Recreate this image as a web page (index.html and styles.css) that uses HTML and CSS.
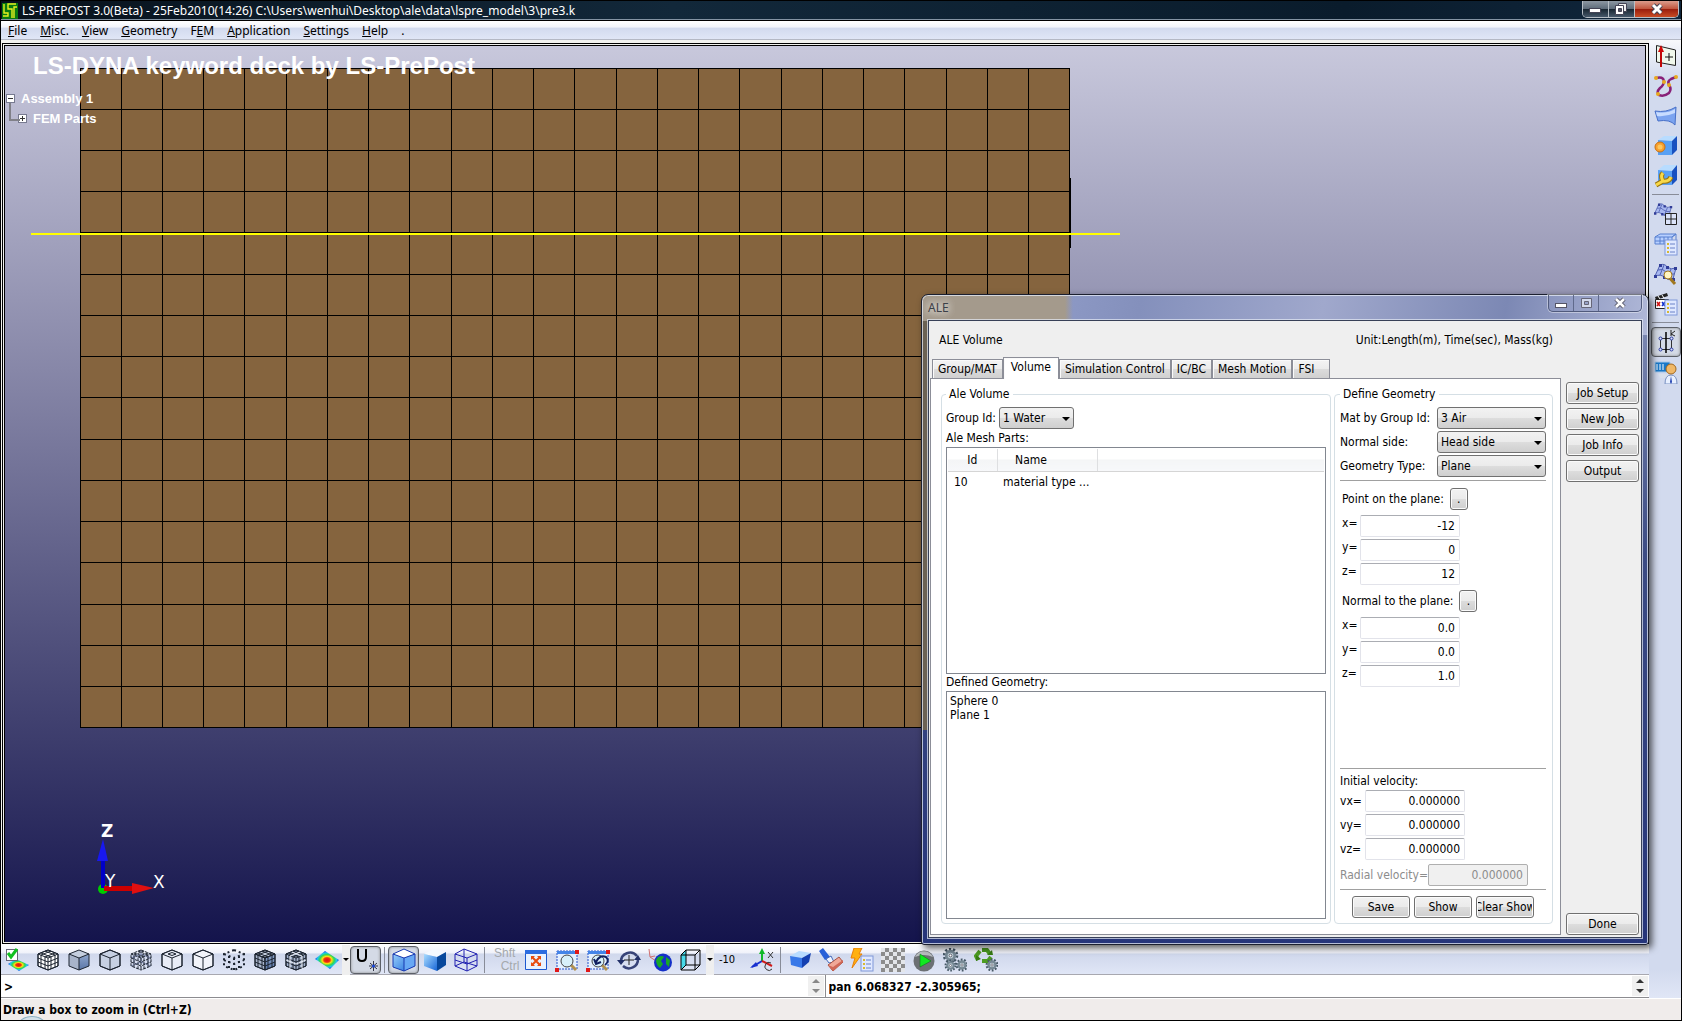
FILE: index.html
```
<!DOCTYPE html>
<html lang="en">
<head>
  <meta charset="UTF-8">
  <title>LS-PREPOST 3.0(Beta)</title>
  <meta name="viewport" content="width=device-width, initial-scale=1.0">
  <link rel="stylesheet" href="styles.css">
</head>
<body>
  <!-- shared shapes -->
  <svg class="defs" width="0" height="0" aria-hidden="true">
    <defs>
      <linearGradient id="blueFace" x1="0" y1="0" x2="1" y2="1">
        <stop offset="0" stop-color="#a9dcff"/><stop offset="1" stop-color="#1766d8"/>
      </linearGradient>
      <linearGradient id="greyFace" x1="0" y1="0" x2="0" y2="1">
        <stop offset="0" stop-color="#8fa6cc"/><stop offset="1" stop-color="#5a76a8"/>
      </linearGradient>
      <radialGradient id="rainbow">
        <stop offset="0" stop-color="#e01010"/><stop offset=".25" stop-color="#f03010"/>
        <stop offset=".4" stop-color="#ffe010"/><stop offset=".6" stop-color="#30d850"/>
        <stop offset=".8" stop-color="#20c8f0"/><stop offset="1" stop-color="#1840e0"/>
      </radialGradient>
      <symbol id="cubeEdges" viewBox="0 0 24 24">
        <path d="M12 2L2 6V18L12 22L22 18V6ZM2 6L12 10L22 6M12 10V22"/>
      </symbol>
      <symbol id="cubeGrid" viewBox="0 0 24 24">
        <path d="M12 2L2 6V18L12 22L22 18V6ZM2 6L12 10L22 6M12 10V22M5 5L15 9V21M9 3L19 7V19M19 5L9 9V21M15 3L5 7V19M2 10L12 14L22 10M2 14L12 18L22 14"/>
      </symbol>
      <symbol id="gear" viewBox="0 0 24 24">
        <circle cx="12" cy="12" r="9" fill="none" stroke="#465866" stroke-width="4" stroke-dasharray="3 2.6"/>
        <circle cx="12" cy="12" r="6" fill="#c4d4dc" stroke="#768894" stroke-width="4"/>
        <circle cx="12" cy="12" r="2" fill="#fff" stroke="#334"/>
      </symbol>
      <symbol id="listSheet" viewBox="0 0 24 24">
        <rect x="11" y="8" width="12" height="15" fill="#dfe8ff" stroke="#7f97d8"/>
        <path d="M13 12H15M13 16H15M13 20H15" stroke="#d8b830" stroke-width="2"/>
        <path d="M16 12H21M16 16H21M16 20H21" stroke="#6a82c8"/>
      </symbol>
      <symbol id="curvedMesh" viewBox="0 0 24 24">
        <path d="M1 14L6 3Q11 1 13 5Q17 8 22 6L19 17Q14 19 10 15Q7 12 1 14Z" fill="#a8b8f0" stroke="#5060b0"/>
        <path d="M4 8Q9 6 12 10Q16 13 20 12M6 13L10 3M13 17L17 7" fill="none" stroke="#5060b0"/>
        <path d="M0 13h3v3H0zM5 2h3v3H5zM12 4h3v3h-3zM20 5h3v3h-3zM18 16h3v3h-3zM9 14h3v3H9z" fill="#303c98"/>
      </symbol>
      <symbol id="zoomFrame" viewBox="0 0 24 24">
        <path d="M2 3H22V21H2Z" fill="#e4f0ff" stroke="#2450c8" stroke-dasharray="2 1"/>
        <path d="M2 3H22V6H2Z" fill="#4484e8"/>
        <path d="M0 20h4v4H0zM20 2h4v4h-4z" fill="#e01818"/>
      </symbol>
    </defs>
  </svg>

  <div class="app">
    <header class="titlebar">
      <svg class="app-logo" viewBox="0 0 16 16" aria-hidden="true">
        <rect width="16" height="16" fill="#0a7a10"/>
        <path d="M2 1V10H6V13H1M14 1H6V6H10V15M15 4H12V15" fill="none" stroke="#e8f020" stroke-width="1.4"/>
      </svg>
      <h1 class="titlebar-text">LS-PREPOST 3.0(Beta) - 25Feb2010(14:26) C:\Users\wenhui\Desktop\ale\data\lspre_model\3\pre3.k</h1>
      <div class="win-buttons">
        <button class="win-btn" aria-label="Minimize"><svg viewBox="0 0 24 14"><rect x="6.500" y="6.500" width="11" height="4" fill="#fff" stroke="#445"/></svg></button>
        <button class="win-btn" aria-label="Restore"><svg viewBox="0 0 24 14"><path d="M9.500 1.500H17.500V9.500H9.500Z" fill="#eee" stroke="#445"/><path d="M6.500 3.500H14.500V12.500H6.500Z" fill="#fff" stroke="#445"/><path d="M9.500 6.500H12.500V9.500H9.500Z" fill="#556" stroke="#445"/></svg></button>
        <button class="win-btn win-close" aria-label="Close"><svg viewBox="0 0 24 14"><path d="M8 3L16 11M16 3L8 11" stroke="#445" stroke-width="5"/><path d="M8 3L16 11M16 3L8 11" stroke="#fff" stroke-width="3"/></svg></button>
      </div>
    </header>

    <nav class="menubar">
      <a href="#"><u>F</u>ile</a>
      <a href="#"><u>M</u>isc.</a>
      <a href="#"><u>V</u>iew</a>
      <a href="#"><u>G</u>eometry</a>
      <a href="#">F<u>E</u>M</a>
      <a href="#"><u>A</u>pplication</a>
      <a href="#"><u>S</u>ettings</a>
      <a href="#"><u>H</u>elp</a>
      <a href="#">.</a>
    </nav>

    <div class="workspace">
      <main class="work-column">
        <div class="viewport-frame">
          <div class="viewport">
            <svg class="mesh" viewBox="0 0 24 16" preserveAspectRatio="none" aria-hidden="true">
              <rect width="24" height="16" fill="#85643e"/>
              <path d="M0 0V16M1 0V16M2 0V16M3 0V16M4 0V16M5 0V16M6 0V16M7 0V16M8 0V16M9 0V16M10 0V16M11 0V16M12 0V16M13 0V16M14 0V16M15 0V16M16 0V16M17 0V16M18 0V16M19 0V16M20 0V16M21 0V16M22 0V16M23 0V16M24 0V16M0 0H24M0 1H24M0 2H24M0 3H24M0 4H24M0 5H24M0 6H24M0 7H24M0 8H24M0 9H24M0 10H24M0 11H24M0 12H24M0 13H24M0 14H24M0 15H24M0 16H24"/>
            </svg>
            <div class="mesh-node"></div>
            <div class="cut-plane"></div>
            <h2 class="deck-title">LS-DYNA keyword deck by LS-PrePost</h2>
            <div class="tree">
              <div class="tree-row">
                <svg viewBox="0 0 9 9"><rect x=".5" y=".5" width="8" height="8" fill="#fff" stroke="#777a90"/><path d="M2 4.500H7" stroke="#333"/></svg>
                <span>Assembly 1</span>
              </div>
              <div class="tree-row tree-child">
                <svg viewBox="0 0 9 9"><rect x=".5" y=".5" width="8" height="8" fill="#fff" stroke="#777a90"/><path d="M2 4.500H7M4.500 2V7" stroke="#333"/></svg>
                <span>FEM Parts</span>
              </div>
            </div>
            <div class="triad">
              <svg viewBox="0 0 60 60" aria-hidden="true">
                <circle cx="6" cy="53" r="5" fill="#0c0"/>
                <path d="M4 52V24H8V52Z" fill="#0000c8"/><path d="M0 25L6 3L11 25Z" fill="#1818f0"/>
                <path d="M7 50H36V55H7Z" fill="#c00"/><path d="M35 47L57 52L35 58Z" fill="#e01010"/>
              </svg>
              <span class="axis axis-z">Z</span>
              <span class="axis axis-y">Y</span>
              <span class="axis axis-x">X</span>
            </div>
          </div>
        </div>

        <div class="toolbar">
          <button class="tool" aria-label="Apply fringe"><svg viewBox="0 0 24 24"><path d="M3 16L11 11L24 17L14 23Z" fill="url(#rainbow)"/><rect x="1.500" y="1.500" width="11" height="11" fill="#fff" stroke="#667"/><path d="M3 5L6 9L12 1" fill="none" stroke="#10c020" stroke-width="3"/></svg></button>
          <button class="tool" aria-label="Mesh hidden"><svg class="line" viewBox="0 0 24 24"><path d="M12 2L2 6V18L12 22L22 18V6Z" fill="#fff"/><use href="#cubeGrid"/></svg></button>
          <button class="tool" aria-label="Shaded"><svg class="line" viewBox="0 0 24 24"><path d="M12 2L2 6L12 10L22 6Z" fill="#c4cede" stroke="none"/><path d="M2 6V18L12 22V10Z" fill="#a8b4ca" stroke="none"/><path d="M12 10V22L22 18V6Z" fill="url(#greyFace)" stroke="none"/><use href="#cubeEdges"/></svg></button>
          <button class="tool" aria-label="Flat"><svg class="line" viewBox="0 0 24 24"><path d="M12 2L2 6V18L12 22L22 18V6Z" fill="#c6d0e2"/><use href="#cubeEdges"/></svg></button>
          <button class="tool" aria-label="Wireframe"><svg class="line" viewBox="0 0 24 24"><path d="M2 18L12 14L22 18M12 2V14M2 10L12 6L22 10M5 8V16M19 8V16" stroke="#7480a8"/><use href="#cubeGrid" stroke-dasharray="3 1"/></svg></button>
          <button class="tool" aria-label="Feature lines"><svg class="line" viewBox="0 0 24 24"><path d="M12 2L2 6V18L12 22L22 18V6Z" fill="#e8ecf6"/><use href="#cubeEdges"/><path d="M8 6L12 4.500L16 6L12 7.500Z"/></svg></button>
          <button class="tool" aria-label="Edges"><svg class="line" viewBox="0 0 24 24"><path d="M12 2L2 6V18L12 22L22 18V6Z" fill="#f2f4fa"/><use href="#cubeEdges"/></svg></button>
          <button class="tool" aria-label="Points"><svg class="line" viewBox="0 0 24 24"><path stroke-width="2" stroke-dasharray="2 3" d="M12 2L2 6V18L12 22L22 18V6ZM2 6L12 10L22 6M12 10V22M7 8V20M17 8V20M2 12L12 16L22 12"/></svg></button>
          <button class="tool" aria-label="Shaded mesh"><svg class="line" viewBox="0 0 24 24"><path d="M12 2L2 6L12 10L22 6Z" fill="#c4cede"/><path d="M2 6V18L12 22V10Z" fill="#a8b4ca"/><path d="M12 10V22L22 18V6Z" fill="url(#greyFace)"/><use href="#cubeGrid"/></svg></button>
          <button class="tool" aria-label="Shrunk mesh"><svg class="line" viewBox="0 0 24 24"><path d="M12 2L2 6V18L12 22L22 18V6Z" fill="#a4b2cc"/><use href="#cubeGrid"/><path d="M8 4L18 8V20M16 4L6 8V20M2 12L12 16L22 12" stroke="#e8ecf4"/></svg></button>
          <button class="tool" aria-label="Fringe"><svg viewBox="0 0 24 24"><path d="M0 11L10 3L24 12L15 21Z" fill="url(#rainbow)"/></svg></button>
          <button class="drop" aria-label="Fringe options"></button>
          <button class="tool pressed" aria-label="Unreferenced nodes"><svg viewBox="0 0 24 24"><path d="M4 1V9Q4 13 8 13Q12 13 12 9V1" fill="none" stroke="#000" stroke-width="2"/><path d="M15 18H24M19.500 13V23M16 15L23 21M23 15L16 21" stroke="#334"/><circle cx="19.500" cy="18" r="1.500" fill="#1848e0"/></svg></button>
          <span class="divider"></span>
          <button class="tool pressed" aria-label="Surface edges"><svg viewBox="0 0 24 24"><path d="M12 1L1 6V19L12 23L23 18V6Z" fill="url(#blueFace)"/><path d="M12 1L1 6L12 10L23 6Z" fill="#fff"/><path d="M12 10V23L23 18V6Z" fill="#68a8f4"/><path d="M12 1L1 6V19L12 23L23 18V6ZM1 6L12 10L23 6M12 10V23" fill="none" stroke="#1838b0"/></svg></button>
          <button class="tool" aria-label="Surface"><svg viewBox="0 0 24 24"><path d="M11 1L1 6L14 9L23 4Z" fill="#f4f9ff"/><path d="M1 6V18L14 23V9Z" fill="url(#blueFace)"/><path d="M14 9V23L23 17V4Z" fill="#08489c"/></svg></button>
          <button class="tool" aria-label="Surface wire"><svg viewBox="0 0 24 24"><path d="M10 1L1 6V18L13 23L23 18V6ZM1 6L13 10L23 6M13 10V23M10 1V14L1 18M10 14L23 18M1 12L13 16L23 12" fill="none" stroke="#2020b0"/></svg></button>
          <span class="divider"></span>
          <span class="keys">Shft<br>&nbsp; Ctrl</span>
          <button class="tool" aria-label="Fit"><svg viewBox="0 0 24 24"><path d="M1.500 2.500H22.500V21.500H1.500Z" fill="#e8f2ff" stroke="#1c58d0"/><path d="M1 2H23V6H1Z" fill="#2c6ce0"/><path d="M8 9L16 17M16 9L8 17" stroke="#e84c10" stroke-width="2"/><path d="M7 8h4l-4 4zM17 8v4l-4-4zM7 18v-4l4 4zM17 18h-4l4-4z" fill="#e84c10"/></svg></button>
          <button class="tool" aria-label="Zoom box"><svg viewBox="0 0 24 24"><use href="#zoomFrame"/><path d="M16 17L21 22" stroke="#b09050" stroke-width="3"/><circle cx="12" cy="13" r="6" fill="#d8f0fa" stroke="#444"/></svg></button>
          <button class="tool" aria-label="Zoom back"><svg viewBox="0 0 24 24"><use href="#zoomFrame"/><path d="M16 17L21 22" stroke="#b09050" stroke-width="3"/><circle cx="12" cy="13" r="6" fill="#d8f0fa" stroke="#444"/><path d="M10 14Q14 6 20 9Q24 13 19 17M8 11L10 16L15 14" fill="none" stroke="#102060" stroke-width="2"/></svg></button>
          <button class="tool" aria-label="Rotate"><svg viewBox="0 0 24 24"><path d="M4 14A9 9 0 0 1 20 8M21 11A9 9 0 0 1 6 18" fill="none" stroke="#384478" stroke-width="2.500"/><path d="M0 12H8L4 17ZM17 12H24L21 7Z" fill="#223068"/><path d="M7 12H17M12 7V17" stroke="#222"/></svg></button>
          <button class="tool" aria-label="Globe view"><svg viewBox="0 0 24 24"><path d="M1 1L2 9L7 8M2 9L8 13" fill="none" stroke="#d07070"/><circle cx="15" cy="14.500" r="9" fill="#1430c8"/><path d="M10 9Q14 7 16 9L13 13L15 16L12 20Q8 17 8 12ZM18 9L22 12L21 19L18 16Z" fill="#18a828"/></svg></button>
          <button class="tool" aria-label="View cube"><svg viewBox="0 0 24 24"><path d="M2 7L7 2V17L2 22Z" fill="#48d8e8"/><path d="M2 7H16V22H2ZM2 7L7 2H21L16 7M21 2V17L16 22M7 2V17H21M7 17L2 22" fill="none" stroke="#000"/></svg></button>
          <button class="drop" aria-label="View options"></button>
          <span class="angle">-10</span>
          <button class="tool" aria-label="Rotate axes"><svg viewBox="0 0 24 24"><path d="M12 13V2" stroke="#10b828" stroke-width="2"/><path d="M9 6L12 0L15 6Z" fill="#10b828"/><path d="M12 13L2 19" stroke="#1830d0" stroke-width="2"/><path d="M0 20L6 14L8 18Z" fill="#1830d0"/><path d="M12 13L22 18" stroke="#d01818" stroke-width="2"/><path d="M18 4L23 10M23 4L18 10M21 15A4 4 0 1 0 22 21" fill="none" stroke="#333"/></svg></button>
          <span class="divider"></span>
          <button class="tool" aria-label="Solid"><svg viewBox="0 0 24 24"><path d="M2 8L11 3L23 5L14 10Z" fill="#b8dcff"/><path d="M2 8L14 10V20L3 17Z" fill="#3878e8"/><path d="M14 10L23 5L21 14L14 20Z" fill="#1440b0"/></svg></button>
          <button class="tool" aria-label="Erase light"><svg viewBox="0 0 24 24"><path d="M0 3L4 0L11 9L6 12Z" fill="#2860d8"/><path d="M7 11L12 8L15 14L10 15Z" fill="#f0f4ff" stroke="#4468b8"/><path d="M9 17L20 9L24 14L14 23Z" fill="#f0a898" stroke="#a85040"/><path d="M9 17L14 19L24 12V14L14 23Z" fill="#d06858"/></svg></button>
          <button class="tool" aria-label="Quick list"><svg viewBox="0 0 24 24"><path d="M4 0H12L9 6H12L2 20L5 10H1Z" fill="#ffb010" stroke="#e88008"/><use href="#listSheet"/></svg></button>
          <button class="tool" aria-label="Transparency"><span class="checker"></span></button>
          <button class="tool" aria-label="Run"><svg viewBox="0 0 24 24"><circle cx="12" cy="13" r="10.500" fill="#6c7074"/><path d="M3 9A10 10 0 0 1 21 9Q12 5 3 9Z" fill="#b8bcc0"/><path d="M8 6L19 13L8 19Z" fill="#10e820" stroke="#086810" stroke-width=".5"/></svg></button>
          <button class="tool" aria-label="Settings"><svg viewBox="0 0 24 24"><use href="#gear" x="-1" y="-1" width="17" height="17"/><use href="#gear" x="1" y="11" width="13" height="13"/><use href="#gear" x="12" y="10" width="14" height="14"/></svg></button>
          <button class="tool" aria-label="Refresh"><svg viewBox="0 0 24 24"><path d="M4 12L2 8L6 3M8 2H13L16 6M17 9L14 13H8" fill="none" stroke="#4c9c20" stroke-width="4"/><path d="M13 7H19L18 2ZM2 13L7 11L2 7Z" fill="#387c14"/><use href="#gear" x="11" y="10" width="14" height="14"/></svg></button>
        </div>

        <div class="command-row">
          <input class="command" type="text" value="&gt;" aria-label="Command">
          <div class="spinner"><button aria-label="Previous command"></button><button aria-label="Next command"></button></div>
          <input class="command command-log" type="text" value="pan 6.068327 -2.305965;" aria-label="Command log">
          <div class="spinner spinner-dark"><button aria-label="Scroll up"></button><button aria-label="Scroll down"></button></div>
        </div>
      </main>

      <aside class="sidebar">
        <button class="side-tool" aria-label="Reference geometry"><svg viewBox="0 0 24 24"><path d="M2.500 1.500L21.500 6V21.500L2.500 18Z" fill="#f0f8ec" stroke="#222"/><path d="M7 23V5" stroke="#c00808" stroke-width="2"/><path d="M4 8L7 1L10 8Z" fill="#d00808"/><path d="M11 13H19M15 9V17" stroke="#111"/></svg></button>
        <button class="side-tool" aria-label="Curve"><svg viewBox="0 0 24 24"><path d="M2 4Q9 2 10 7Q10 11 6 14Q2 18 5 21Q10 23 15 19Q18 15 15 11Q13 7 17 5L22 3" fill="none" stroke="#882078" stroke-width="2.500"/><g fill="#e8a820"><circle cx="2" cy="4" r="2"/><circle cx="10" cy="8" r="2"/><circle cx="4" cy="20" r="2"/><circle cx="15" cy="11" r="2"/><circle cx="22" cy="3" r="2"/></g></svg></button>
        <button class="side-tool" aria-label="Surface"><svg viewBox="0 0 24 24"><path d="M1 7Q12 9 22 3L21 21Q16 15 4 17Z" fill="#7ca4f0" stroke="#4870c8"/><path d="M2 8Q13 10 21 5V9Q12 13 3 12Z" fill="#c8dcff"/></svg></button>
        <button class="side-tool" aria-label="Solid"><svg viewBox="0 0 24 24"><path d="M4 6L10 2H23L18 7Z" fill="#b8dcff"/><path d="M4 6L18 7V21H4Z" fill="#58a0f4"/><path d="M18 7L23 2V16L18 21Z" fill="#1850c0"/><circle cx="6" cy="13" r="5" fill="#f8a030" stroke="#c87010"/><circle cx="6" cy="13" r="2.500" fill="#fcc860"/></svg></button>
        <button class="side-tool" aria-label="Geometry tools"><svg viewBox="0 0 24 24"><path d="M4 6L10 1H23L18 7Z" fill="#b8dcff"/><path d="M4 6L18 7V21H4Z" fill="#58a0f4"/><path d="M18 7L23 1V16L18 21Z" fill="#1850c0"/><path d="M2 21L9 17Q6 12 9 9M9 17Q15 18 17 13" fill="none" stroke="#987410" stroke-width="5"/><path d="M2 21L9 17Q6 12 9 9M9 17Q15 18 17 13" fill="none" stroke="#f8d848" stroke-width="3"/></svg></button>
        <span class="side-divider"></span>
        <button class="side-tool" aria-label="Mesh"><svg viewBox="0 0 24 24"><use href="#curvedMesh" x="0" y="0" width="19" height="19"/><path d="M11.500 11.500H22.500V22.500H11.500ZM17 11V23M11 17H23" fill="#dce4fa" stroke="#222"/></svg></button>
        <button class="side-tool" aria-label="Model list"><svg viewBox="0 0 24 24"><path d="M1 5L6 2H22L18 5V12H1Z" fill="#b8d0ff" stroke="#5880d0"/><path d="M1 5H18L22 2V9M6 5V12M10 5V12M14 5V12M1 9H18" fill="none" stroke="#5880d0"/><use href="#listSheet"/></svg></button>
        <button class="side-tool" aria-label="Element tools"><svg viewBox="0 0 24 24"><use href="#curvedMesh" width="24" height="24"/><path d="M14 14L21 22" stroke="#a07820" stroke-width="3"/><circle cx="14" cy="13" r="4" fill="#fff4c0" stroke="#a07820"/></svg></button>
        <button class="side-tool" aria-label="Post"><svg viewBox="0 0 24 24"><path d="M1 5L13 1L14 4L2 8Z" fill="#222"/><path d="M4 4L6 7M8 3L10 6" stroke="#fff"/><path d="M1.500 7.500H14.500V16.500H1.500Z" fill="#fff" stroke="#222"/><path d="M3 10L6 14M6 10L3 14" stroke="#d01010" stroke-width="1.500"/><path d="M8 10L11 14M11 10L8 14" stroke="#1030d0" stroke-width="1.500"/><use href="#listSheet"/></svg></button>
        <span class="side-divider"></span>
        <button class="side-tool pressed" aria-label="ALE"><svg viewBox="0 0 24 24"><path d="M6.500 8.500H17.500V19.500H6.500Z" fill="none" stroke="#333"/><path d="M12 2V23" stroke="#000" stroke-width="1.500"/><g fill="#dce4fa" stroke="#2838a0"><circle cx="6.500" cy="8.500" r="1.500"/><circle cx="17.500" cy="8.500" r="1.500"/><circle cx="6.500" cy="19.500" r="1.500"/><circle cx="17.500" cy="19.500" r="1.500"/></g><path d="M17 0V6M21 1L17 4L21 6" fill="none" stroke="#222"/></svg></button>
        <button class="side-tool" aria-label="User"><svg viewBox="0 0 24 24"><path d="M1 2H16V12H1Z" fill="#1878c8" stroke="#a8c8e8"/><path d="M3 4V10M6 4V10M9 4V10" stroke="#fff"/><path d="M4 14H14V18H6Z" fill="#d8e0ec"/><path d="M11 24Q11 15 17 15Q23 15 23 24Z" fill="#e8f0ff" stroke="#7890c0"/><path d="M17 16L18 22L17 24L16 22Z" fill="#2040b0"/><circle cx="17" cy="9" r="5" fill="#f0b868" stroke="#a06820"/></svg></button>
      </aside>
    </div>

    <footer class="statusbar">Draw a box to zoom in (Ctrl+Z)</footer>

    <section class="dialog" aria-label="ALE">
      <div class="dialog-title">
        <span>ALE</span>
        <div class="dialog-buttons">
          <button aria-label="Minimize"><svg viewBox="0 0 24 16"><rect x="6.500" y="8.500" width="11" height="4" fill="#fff" stroke="#556"/></svg></button>
          <button aria-label="Maximize"><svg viewBox="0 0 24 16"><path d="M7.500 3.500H17.500V12.500H7.500ZM10.500 6.500H14.500V9.500H10.500Z" fill="#d4daec" fill-rule="evenodd" stroke="#667"/></svg></button>
          <button class="dialog-close" aria-label="Close"><svg viewBox="0 0 24 16"><path d="M8 4L16 12M16 4L8 12" stroke="#556" stroke-width="4.500"/><path d="M8 4L16 12M16 4L8 12" stroke="#fff" stroke-width="2.500"/></svg></button>
        </div>
      </div>
      <div class="dialog-body">
        <div class="dialog-head">
          <span>ALE Volume</span>
          <span class="units">Unit:Length(m), Time(sec), Mass(kg)</span>
        </div>
        <div class="dialog-main">
          <div class="tab-area">
            <div class="tabs" role="tablist">
              <button class="tab" role="tab">Group/MAT</button>
              <button class="tab active" role="tab" aria-selected="true">Volume</button>
              <button class="tab" role="tab">Simulation Control</button>
              <button class="tab" role="tab">IC/BC</button>
              <button class="tab" role="tab">Mesh Motion</button>
              <button class="tab tab-last" role="tab">FSI</button>
            </div>
            <div class="tab-page">
              <fieldset class="group volume-group">
                <legend>Ale Volume</legend>
                <div class="field-row">
                  <label for="groupId">Group Id:</label>
                  <span class="select select-small"><select id="groupId"><option>1 Water</option></select></span>
                </div>
                <div class="list-label">Ale Mesh Parts:</div>
                <div class="list-box">
                  <table class="parts">
                    <thead><tr><th class="col-id">Id</th><th class="col-name">Name</th><th></th></tr></thead>
                    <tbody><tr><td>10</td><td>material type ...</td><td></td></tr></tbody>
                  </table>
                </div>
                <div class="list-label">Defined Geometry:</div>
                <ul class="list-box geometry-list">
                  <li>Sphere 0</li>
                  <li>Plane 1</li>
                </ul>
              </fieldset>

              <fieldset class="group geometry-group">
                <legend>Define Geometry</legend>
                <div class="field-row spread"><label for="mat">Mat by Group Id:</label><span class="select"><select id="mat"><option>3 Air</option></select></span></div>
                <div class="field-row spread"><label for="side">Normal side:</label><span class="select"><select id="side"><option>Head side</option></select></span></div>
                <div class="field-row spread"><label for="type">Geometry Type:</label><span class="select"><select id="type"><option>Plane</option></select></span></div>
                <hr>
                <div class="pick-row">Point on the plane: <button class="btn btn-dot" aria-label="Pick point">.</button></div>
                <div class="coord-row"><label for="px">x=</label><input id="px" type="text" value="-12"></div>
                <div class="coord-row"><label for="py">y=</label><input id="py" type="text" value="0"></div>
                <div class="coord-row"><label for="pz">z=</label><input id="pz" type="text" value="12"></div>
                <div class="pick-row">Normal to the plane: <button class="btn btn-dot" aria-label="Pick normal">.</button></div>
                <div class="coord-row"><label for="nx">x=</label><input id="nx" type="text" value="0.0"></div>
                <div class="coord-row"><label for="ny">y=</label><input id="ny" type="text" value="0.0"></div>
                <div class="coord-row"><label for="nz">z=</label><input id="nz" type="text" value="1.0"></div>
                <div class="velocity">
                  <hr>
                  <div class="velocity-title">Initial velocity:</div>
                  <div class="field-row"><label class="v-label" for="vx">vx=</label><input id="vx" type="text" value="0.000000"></div>
                  <div class="field-row"><label class="v-label" for="vy">vy=</label><input id="vy" type="text" value="0.000000"></div>
                  <div class="field-row"><label class="v-label" for="vz">vz=</label><input id="vz" type="text" value="0.000000"></div>
                  <div class="field-row radial"><label for="vr">Radial velocity=</label><input id="vr" type="text" value="0.000000" disabled></div>
                  <hr>
                  <div class="action-row">
                    <button class="btn">Save</button>
                    <button class="btn">Show</button>
                    <button class="btn"><span>Clear Show</span></button>
                  </div>
                </div>
              </fieldset>
            </div>
          </div>
          <div class="job-buttons">
            <button class="btn">Job Setup</button>
            <button class="btn">New Job</button>
            <button class="btn">Job Info</button>
            <button class="btn">Output</button>
            <button class="btn btn-done">Done</button>
          </div>
        </div>
      </div>
    </section>
  </div>
</body>
</html>
```

FILE: styles.css
```
* {
  box-sizing: border-box;
}
body {
  margin: 0;
  font-family: "DejaVu Sans Condensed", "Noto Sans", sans-serif;
  font-size: 12px;
  color: #000;
}
button, input, select {
  font: inherit;
  color: inherit;
  margin: 0;
  padding: 0;
  border: 0;
  background: none;
}
svg {
  display: block;
}
.defs {
  position: absolute;
}
.app {
  position: relative;
  display: flex;
  flex-direction: column;
  height: 100vh;
  border: 1px solid #000;
  border-top: 0;
  background: #f2f2ee;
  overflow: hidden;
}

/* title bar + menu */
.titlebar {
  display: flex;
  align-items: center;
  height: 21px;
  padding-left: 1px;
  background: linear-gradient(to right, #08121c, #12283a 40%, #0a1c2c 80%, #10263c);
  border-top: 1px solid #000;
  border-bottom: 1px solid #000;
  box-shadow: inset 0 -1px #8494a4;
  color: #fff;
}
.app-logo {
  width: 16px;
  height: 16px;
  margin-right: 4px;
}
.titlebar-text {
  margin: 0;
  font-family: "Noto Sans", sans-serif;
  font-size: 12px;
  font-weight: 400;
}
.win-buttons {
  display: flex;
  align-self: flex-start;
  margin-left: auto;
  margin-right: 2px;
  border: 1px solid #b8bfc6;
  border-top: 0;
  border-radius: 0 0 5px 5px;
  overflow: hidden;
}
.win-btn {
  width: 26px;
  height: 16px;
  border-right: 1px solid #b8bfc6;
  background: linear-gradient(#8c97a2, #5c6a78 50%, #16242f 50%, #46586a);
}
.win-btn svg {
  width: 24px;
  height: 14px;
}
.win-close {
  width: 43px;
  border-right: 0;
  background: linear-gradient(#dc9c8c, #c0543c 50%, #981c0c 50%, #c84c24);
}
.win-close svg {
  margin: auto;
}
.menubar {
  display: flex;
  gap: 13px;
  height: 19px;
  padding-left: 7px;
  line-height: 19px;
  font-family: "Noto Sans", sans-serif;
  background: linear-gradient(#fff, #f2f4fa 35%, #d2daee 38%, #e0e6f6);
  border-bottom: 1px solid #b4b8c4;
}
.menubar a {
  color: #000;
  text-decoration: none;
}

/* main area */
.workspace {
  display: flex;
  flex: 1;
  min-height: 0;
}
.work-column {
  display: flex;
  flex-direction: column;
  flex: 1;
  min-width: 0;
}
.viewport-frame {
  flex: 1;
  min-height: 0;
  margin: 3px 0 0 1px;
  padding: 1px 2px 1px 1px;
  border: 1px solid #000;
}
.viewport {
  position: relative;
  height: 100%;
  border: 1px solid #000;
  border-bottom: 0;
  background: linear-gradient(#c8c8dc, #14144c);
  overflow: hidden;
  color: #fff;
  font-family: "Liberation Sans", Arial, sans-serif;
  font-weight: 700;
}
.mesh {
  position: absolute;
  left: 75px;
  top: 22px;
  width: 990px;
  height: 660px;
  overflow: visible;
}
.mesh path {
  fill: none;
  stroke: #000;
  stroke-width: 1px;
  vector-effect: non-scaling-stroke;
  shape-rendering: crispEdges;
}
.mesh-node {
  position: absolute;
  left: 1064px;
  top: 132px;
  width: 2px;
  height: 70px;
  background: #000;
}
.cut-plane {
  position: absolute;
  left: 26px;
  top: 187px;
  width: 1089px;
  height: 2px;
  background: #ff0;
}
.deck-title {
  position: absolute;
  left: 28px;
  top: 6px;
  margin: 0;
  font-size: 24px;
  line-height: 28px;
}
.tree {
  position: absolute;
  left: 1px;
  top: 42px;
  font-size: 13px;
}
.tree-row {
  display: flex;
  align-items: center;
  gap: 6px;
  height: 20px;
}
.tree-row svg {
  width: 9px;
  height: 9px;
}
.tree-child {
  position: relative;
  padding-left: 12px;
}
.tree-child::before {
  content: "";
  position: absolute;
  left: 3px;
  top: -5px;
  width: 9px;
  height: 16px;
  border-left: 2px solid #808088;
  border-bottom: 2px solid #808088;
}
.triad {
  position: absolute;
  left: 91px;
  bottom: 46px;
  width: 80px;
  height: 72px;
  font-family: "DejaVu Sans", sans-serif;
  font-size: 17px;
  line-height: 17px;
}
.triad svg {
  position: absolute;
  left: 1px;
  bottom: 0;
  width: 60px;
  height: 60px;
}
.axis {
  position: absolute;
}
.axis-z { left: 5px; top: -1px; }
.axis-y { left: 9px; top: 49px; font-weight: 400; }
.axis-x { left: 57px; top: 50px; font-weight: 400; }

/* bottom toolbar */
.toolbar {
  display: flex;
  align-items: center;
  height: 31px;
  padding-top: 1px;
  background: linear-gradient(#fff, #f0f2fa 30%, #d0d8ec 33%, #e0e6f6);
  border-bottom: 1px solid #a8a8b0;
}
.tool {
  display: flex;
  align-items: center;
  justify-content: center;
  width: 31px;
  height: 28px;
  flex: none;
}
.tool svg {
  width: 24px;
  height: 24px;
}
.line {
  fill: none;
  stroke: #1c2430;
}
.pressed {
  border: 1px solid #5c6068;
  border-radius: 4px;
  background: #d4dae6;
  box-shadow: inset 0 0 3px #888;
}
.drop {
  display: flex;
  align-items: center;
  justify-content: center;
  width: 8px;
  height: 30px;
  background: #efefef;
}
.drop::before {
  content: "";
  border: 3px solid transparent;
  border-top-color: #000;
  border-bottom: 0;
}
.divider {
  width: 1px;
  height: 26px;
  margin: 0 3px;
  background: #888c98;
}
.keys {
  width: 32px;
  padding-left: 6px;
  font-family: "Liberation Sans", Arial, sans-serif;
  font-size: 12px;
  line-height: 13px;
  color: #a4a8ac;
  white-space: nowrap;
}
.angle {
  width: 32px;
  padding-left: 5px;
  font-size: 11px;
}
.checker {
  width: 24px;
  height: 24px;
  background: repeating-conic-gradient(#8c8c8c 0 25%, #e4e6ea 0 50%) 0 0 / 8px 8px;
}

/* command line */
.command-row {
  display: flex;
  height: 23px;
  background: #fff;
  border-bottom: 1px solid #8c8c90;
}
.command {
  flex: 1;
  min-width: 0;
  padding: 1px 0 0 3px;
  font-weight: 700;
}
.command-log {
  border-left: 1px solid #8c8c90;
}
.spinner {
  display: flex;
  flex-direction: column;
  justify-content: center;
  gap: 6px;
  width: 16px;
  margin: 1px;
  background: #f0f0f0;
}
.spinner button {
  margin: 0 auto;
  border: 4px solid transparent;
  border-top: 0;
  border-bottom-color: #888;
}
.spinner button:last-child {
  border-top: 4px solid #888;
  border-bottom: 0;
}
.spinner-dark button {
  border-bottom-color: #333;
}
.spinner-dark button:last-child {
  border-top-color: #333;
}

/* right toolbar */
.sidebar {
  display: flex;
  flex-direction: column;
  align-items: center;
  width: 32px;
  padding: 1px 0 0 1px;
  background: linear-gradient(#f8f9fc, #d2daee 4%, #d2daee 97%, #e0e6f6);
}
.side-tool {
  display: flex;
  align-items: center;
  justify-content: center;
  width: 30px;
  height: 30px;
  flex: none;
}
.side-tool svg {
  width: 24px;
  height: 24px;
}
.side-divider {
  width: 27px;
  height: 1px;
  margin: 3px 0 4px;
  background: #888c98;
}
.statusbar {
  position: relative;
  height: 22px;
  padding-left: 2px;
  line-height: 22px;
  font-weight: 700;
  background: #f0eceb;
  border-top: 1px solid #fff;
  overflow: hidden;
}
.statusbar::after {
  content: "";
  position: absolute;
  left: 16px;
  top: 17px;
  width: 28px;
  height: 20px;
  border: 1px solid #8ab0c4;
  border-radius: 50%;
  background: #d4e0e8;
}

/* ALE window */
.dialog {
  position: absolute;
  right: 32px;
  bottom: 75px;
  display: flex;
  flex-direction: column;
  width: 728px;
  height: 651px;
  padding: 0 6px 6px;
  border: 1px solid #1c2030;
  border-radius: 7px 7px 3px 3px;
  background: linear-gradient(to right, #a49a8c, #a49a8c 143px, transparent 151px) 0 0 / 100% 26px no-repeat,
    linear-gradient(to right, #6c6254 6px, transparent 6px) 0 0 / 100% 435px no-repeat,
    linear-gradient(100deg, #9ca8d4, #8490bc 30%, #a0a8cc 55%, #7c88b4 80%, #b0b8d8) 0 0 / 100% 40px no-repeat,
    linear-gradient(#8490b8, #3c4c84 40%, #26357a);
  box-shadow: inset 0 0 0 1px rgba(230, 235, 245, .75), 3px 3px 7px rgba(0, 0, 0, .65);
}
.dialog-title {
  display: flex;
  height: 25px;
  color: #3c4048;
  line-height: 26px;
  font-family: "Noto Sans", sans-serif;
}
.dialog-title span {
  text-shadow: 0 0 8px #fff, 0 0 8px #fff;
}
.dialog-buttons {
  display: flex;
  height: 17px;
  margin-left: auto;
  border: 1px solid #505a7c;
  border-top: 0;
  border-radius: 0 0 5px 5px;
  box-shadow: 0 0 0 1px rgba(255, 255, 255, .4);
}
.dialog-buttons button {
  width: 25px;
  border-right: 1px solid #606a8c;
}
.dialog-buttons svg {
  width: 24px;
  height: 16px;
}
.dialog-buttons .dialog-close {
  width: 42px;
  border-right: 0;
}
.dialog-close svg {
  margin: auto;
}
.dialog-body {
  display: flex;
  flex-direction: column;
  flex: 1;
  min-height: 0;
  border: 1px solid #384058;
  box-shadow: 0 0 0 1px rgba(230, 235, 245, .7);
  background: #efefef;
}
.dialog-head {
  display: flex;
  height: 35px;
  padding: 0 88px 0 10px;
  line-height: 38px;
}
.units {
  margin-left: auto;
}
.dialog-main {
  display: flex;
  flex: 1;
  gap: 5px;
  min-height: 0;
  padding: 0 2px 2px 1px;
}
.tab-area {
  display: flex;
  flex-direction: column;
  flex: 1;
}
.tabs {
  display: flex;
  align-items: flex-end;
  height: 22px;
  padding-left: 2px;
}
.tab {
  height: 19px;
  padding: 0 5px;
  border: 1px solid #8c8e98;
  border-bottom: 0;
  background: linear-gradient(#f4f4f4, #ebebeb 50%, #dcdcdc 50%, #d0d0d0);
  box-shadow: inset 1px 1px #fafafa;
  white-space: nowrap;
}
.tab.active {
  position: relative;
  height: 22px;
  margin: 0 0 -1px;
  padding: 0 7px 3px;
  background: #fff;
}
.tab-last {
  padding-right: 15px;
}
.tab-page {
  display: flex;
  flex: 1;
  gap: 3px;
  min-height: 0;
  padding: 8px 7px 10px 10px;
  border: 1px solid #8c8e98;
  background: #fff;
}
.group {
  display: flex;
  flex-direction: column;
  min-width: 0;
  margin: 0;
  padding: 0 4px 4px;
  border: 1px solid #d5dfe5;
  border-radius: 4px;
}
.group legend {
  padding: 0 3px;
  line-height: 15px;
}
.volume-group {
  flex: 1;
}
.geometry-group {
  width: 219px;
  padding: 0 6px 5px 5px;
}
.field-row {
  display: flex;
  align-items: center;
  height: 22px;
  margin-bottom: 2px;
  gap: 3px;
}
.volume-group .field-row,
.geometry-group .field-row.spread:first-of-type {
  margin-top: 5px;
}
.volume-group .field-row {
  margin-bottom: 1px;
}
.spread {
  justify-content: space-between;
}
.select {
  position: relative;
  width: 109px;
}
.select-small {
  width: 75px;
}
.select select {
  display: block;
  width: 100%;
  height: 22px;
  padding: 0 16px 0 3px;
  appearance: none;
  border: 1px solid #707070;
  border-radius: 3px;
  background: linear-gradient(#f2f2f2, #ebebeb 50%, #dddddd 50%, #cfcfcf);
}
.select::after {
  content: "";
  position: absolute;
  right: 4px;
  top: 10px;
  border: 4px solid transparent;
  border-top-color: #000;
  border-bottom: 0;
  pointer-events: none;
}
.list-label {
  line-height: 17px;
}
.list-box {
  flex: 1;
  margin: 0;
  padding: 1px;
  border: 1px solid #828790;
  background: #fff;
}
.parts {
  width: 100%;
  border-collapse: collapse;
  table-layout: fixed;
}
.parts th {
  height: 22px;
  padding: 0;
  font-weight: 400;
  background: linear-gradient(#fff 45%, #f4f5f6 50%, #f7f8fa);
  border-right: 1px solid #dedfe1;
  border-bottom: 1px solid #d5d5d5;
}
.parts th:last-child {
  border-right: 0;
}
.parts .col-id {
  width: 49px;
}
.parts .col-name {
  width: 100px;
  padding-right: 32px;
}
.parts td {
  height: 22px;
  padding: 0 6px;
  white-space: nowrap;
}
.geometry-list {
  padding: 2px 3px;
  list-style: none;
  line-height: 14px;
}
.group hr {
  width: 100%;
  height: 1px;
  margin: 1px 0 4px;
  border: 0;
  background: #a0a0a0;
}
.btn {
  height: 22px;
  border: 1px solid #707070;
  border-radius: 3px;
  background: linear-gradient(#f2f2f2, #ebebeb 50%, #dddddd 50%, #cfcfcf);
  box-shadow: inset 0 0 0 1px #fbfbfb;
}
.btn-dot {
  width: 18px;
}
.pick-row {
  display: flex;
  align-items: center;
  gap: 6px;
  height: 22px;
  margin: 3px 0 5px 2px;
}
.coord-row {
  display: flex;
  height: 22px;
  margin: 0 0 2px 2px;
}
.coord-row label {
  width: 18px;
  line-height: 16px;
}
.coord-row input,
.field-row input {
  width: 100px;
  height: 22px;
  padding-right: 4px;
  text-align: right;
  border: 1px solid #e2e3ea;
  border-top-color: #abadb3;
  border-radius: 2px;
}
.velocity {
  margin-top: auto;
}
.velocity-title {
  line-height: 17px;
}
.v-label {
  width: 22px;
}
.field-row.radial {
  gap: 0;
  margin: 4px 0 3px;
  color: #8c8c8c;
}
.field-row input:disabled {
  border: 1px solid #afafaf;
  background: #f0f0f0;
}
.action-row {
  display: flex;
  justify-content: center;
  gap: 4px;
  padding-top: 2px;
}
.action-row .btn {
  display: flex;
  align-items: center;
  justify-content: center;
  width: 58px;
  padding: 0 1px;
  white-space: nowrap;
}
.action-row .btn span {
  display: flex;
  justify-content: center;
  width: 100%;
  overflow: hidden;
}
.job-buttons {
  display: flex;
  flex-direction: column;
  gap: 4px;
  width: 73px;
  padding-top: 26px;
}
.btn-done {
  margin-top: auto;
}
```
